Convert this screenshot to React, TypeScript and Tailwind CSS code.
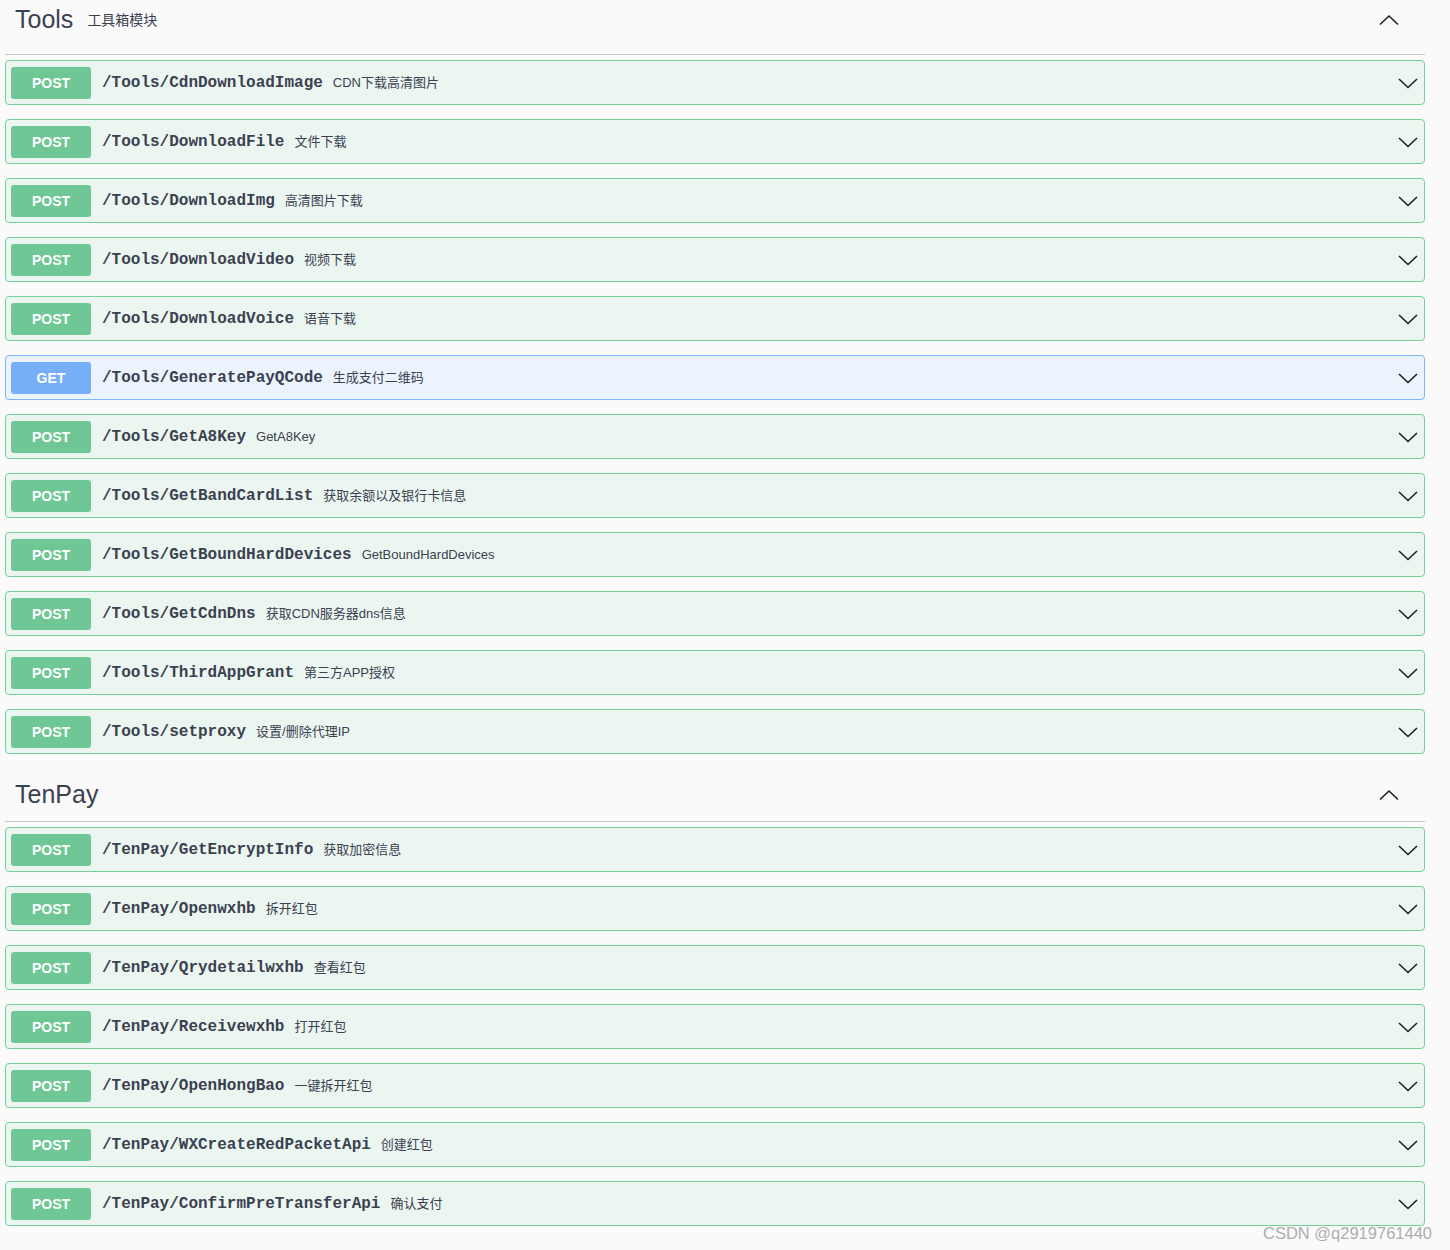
import React from 'react';

type Op = { method: 'POST' | 'GET'; path: string; summary: string };

const sections: { name: string; desc?: string; ops: Op[] }[] = [
  {
    name: 'Tools',
    desc: '工具箱模块',
    ops: [
      { method: 'POST', path: '/Tools/CdnDownloadImage', summary: 'CDN下载高清图片' },
      { method: 'POST', path: '/Tools/DownloadFile', summary: '文件下载' },
      { method: 'POST', path: '/Tools/DownloadImg', summary: '高清图片下载' },
      { method: 'POST', path: '/Tools/DownloadVideo', summary: '视频下载' },
      { method: 'POST', path: '/Tools/DownloadVoice', summary: '语音下载' },
      { method: 'GET', path: '/Tools/GeneratePayQCode', summary: '生成支付二维码' },
      { method: 'POST', path: '/Tools/GetA8Key', summary: 'GetA8Key' },
      { method: 'POST', path: '/Tools/GetBandCardList', summary: '获取余额以及银行卡信息' },
      { method: 'POST', path: '/Tools/GetBoundHardDevices', summary: 'GetBoundHardDevices' },
      { method: 'POST', path: '/Tools/GetCdnDns', summary: '获取CDN服务器dns信息' },
      { method: 'POST', path: '/Tools/ThirdAppGrant', summary: '第三方APP授权' },
      { method: 'POST', path: '/Tools/setproxy', summary: '设置/删除代理IP' },
    ],
  },
  {
    name: 'TenPay',
    ops: [
      { method: 'POST', path: '/TenPay/GetEncryptInfo', summary: '获取加密信息' },
      { method: 'POST', path: '/TenPay/Openwxhb', summary: '拆开红包' },
      { method: 'POST', path: '/TenPay/Qrydetailwxhb', summary: '查看红包' },
      { method: 'POST', path: '/TenPay/Receivewxhb', summary: '打开红包' },
      { method: 'POST', path: '/TenPay/OpenHongBao', summary: '一键拆开红包' },
      { method: 'POST', path: '/TenPay/WXCreateRedPacketApi', summary: '创建红包' },
      { method: 'POST', path: '/TenPay/ConfirmPreTransferApi', summary: '确认支付' },
    ],
  },
];

const sans = "font-['Liberation_Sans','Noto_Sans_CJK_SC',sans-serif]";

const ChevronDown = () => (
  <svg width="20" height="20" viewBox="0 0 20 20" fill="none">
    <path d="M1 6 L10 14.5 L19 6" stroke="#1f1f1f" strokeWidth="1.6" />
  </svg>
);

const ChevronUp = () => (
  <svg width="20" height="20" viewBox="0 0 20 20" fill="none">
    <path d="M1 14.5 L10 6 L19 14.5" stroke="#1f1f1f" strokeWidth="1.6" />
  </svg>
);

const OpRow = ({ op }: { op: Op }) => {
  const isGet = op.method === 'GET';
  return (
    <div
      className={`flex items-center h-[45px] mb-[14px] px-[5px] rounded border ${
        isGet ? 'bg-[#ebf3fc] border-[#7db4fa]' : 'bg-[#ecf6f0] border-[#76d09b]'
      }`}
    >
      <span
        className={`w-[80px] h-8 flex items-center justify-center rounded-[3px] text-white text-sm font-bold ${sans} ${
          isGet ? 'bg-[#76aef7]' : 'bg-[#6ec795]'
        }`}
      >
        {op.method}
      </span>
      <span className="pl-[11px] pr-[10px] text-base font-bold text-[#3b4151] font-['Liberation_Mono',monospace]">
        {op.path}
      </span>
      <span className={`text-[13px] text-[#3b4151] ${sans}`}>{op.summary}</span>
      <span className="ml-auto pr-[1px] flex items-center">
        <ChevronDown />
      </span>
    </div>
  );
};

export default function App() {
  return (
    <div className={`relative min-h-screen bg-[#fafafa] overflow-hidden ${sans}`}>
      <div className="w-[1420px] ml-[5px]">
        {sections.map((s, i) => (
          <section key={s.name}>
            <div
              className={`flex items-center border-b border-[#c9c9c9] pl-[10px] pr-[26px] ${
                i === 0 ? 'h-[55px] pb-[15px]' : 'h-[54px]'
              }`}
            >
              <h3 className="text-[25px] text-[#3b4151]">{s.name}</h3>
              {s.desc && <span className="ml-[14px] text-sm text-[#3b4151]">{s.desc}</span>}
              <span className="ml-auto flex items-center">
                <ChevronUp />
              </span>
            </div>
            <div className="mt-[5px]">
              {s.ops.map((op) => (
                <OpRow key={op.path} op={op} />
              ))}
            </div>
          </section>
        ))}
      </div>
      {/* watermark */}
      <span className="absolute left-[1263px] top-[1221px] text-[16.5px] text-[#a3a3a3]/90">
        CSDN @q2919761440
      </span>
    </div>
  );
}
